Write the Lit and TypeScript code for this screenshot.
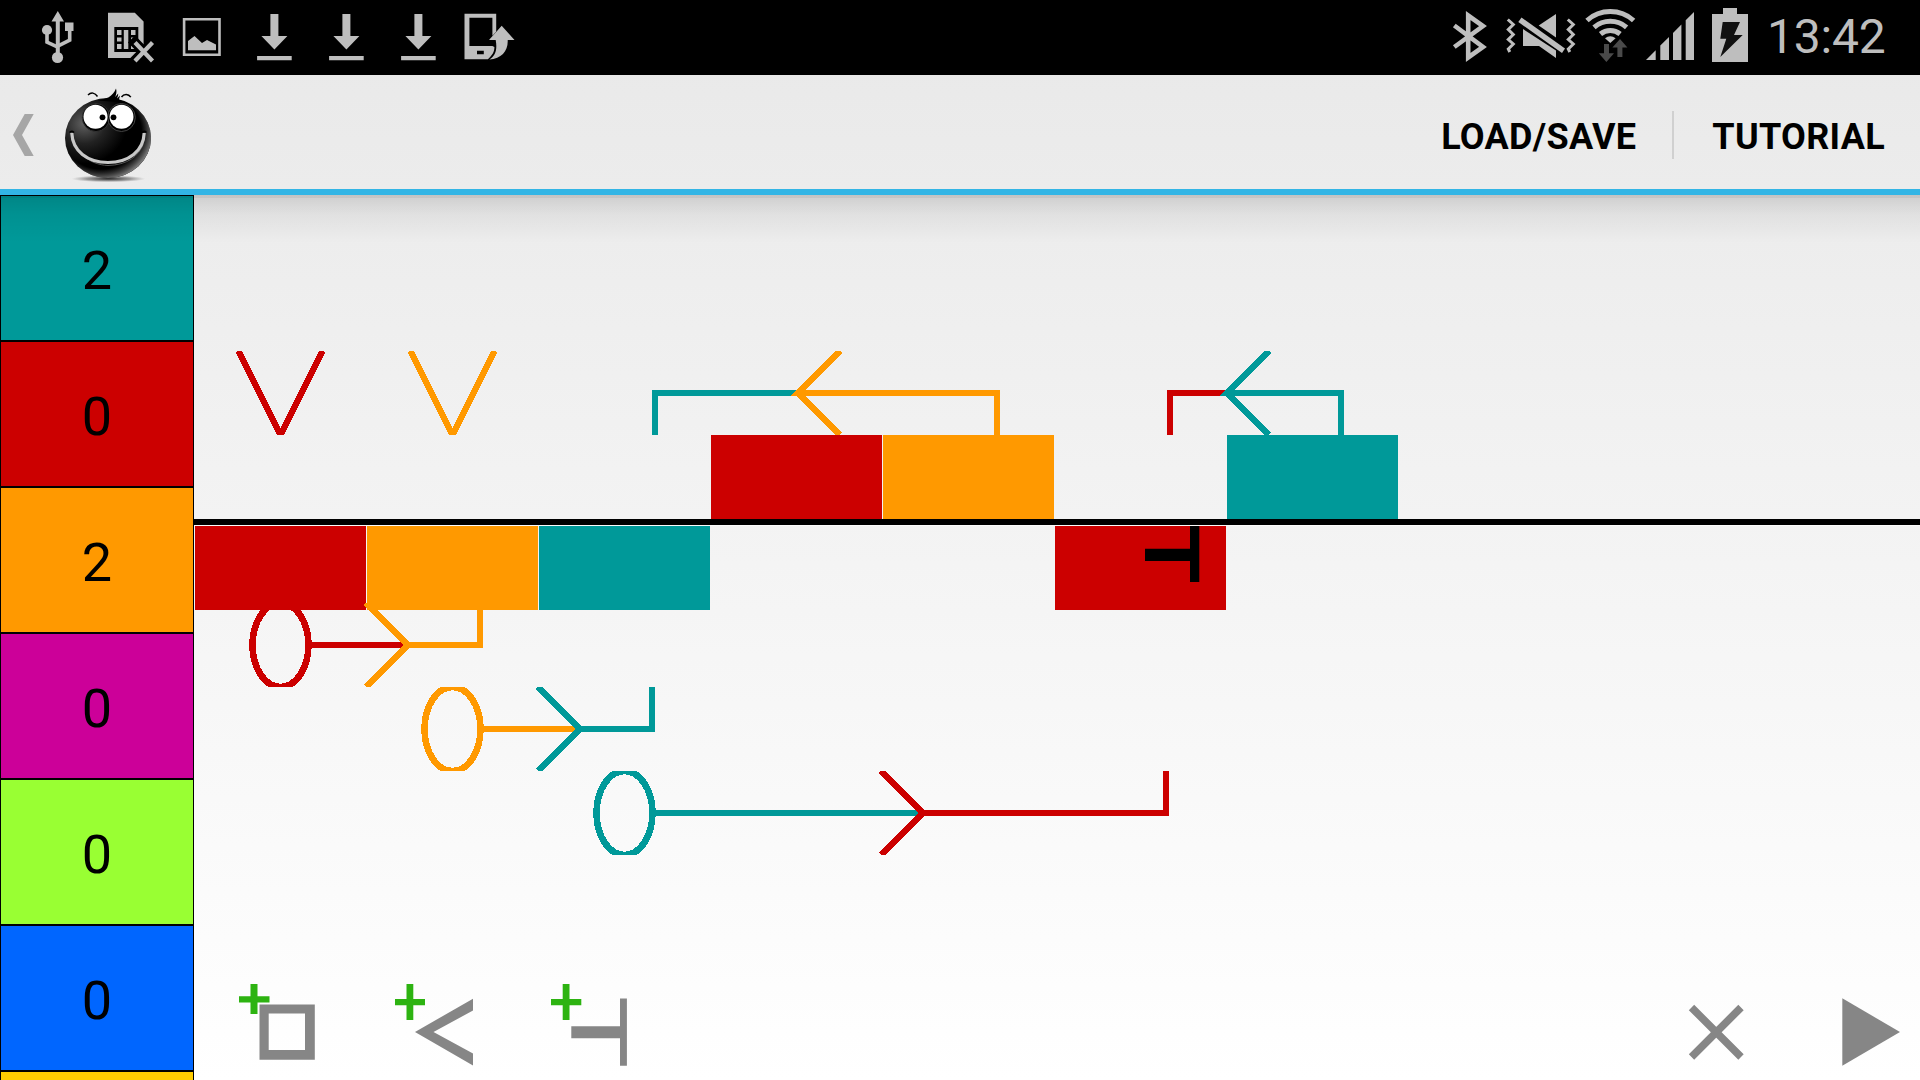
import { LitElement, html, svg, css } from "lit";
import { customElement } from "lit/decorators.js";

const RED = "#cc0000";
const ORANGE = "#ff9900";
const TEAL = "#009999";
const GREY = "#bebebe";

const registers = [
  { color: TEAL, count: "2" },
  { color: RED, count: "0" },
  { color: ORANGE, count: "2" },
  { color: "#cc0099", count: "0" },
  { color: "#99ff33", count: "0" },
  { color: "#0066ff", count: "0" },
  { color: "#ffcc00", count: "" },
];

const blocks = [
  { x: 195, y: 526, color: RED },
  { x: 367, y: 526, color: ORANGE },
  { x: 539, y: 526, color: TEAL },
  { x: 711, y: 435, color: RED },
  { x: 883, y: 435, color: ORANGE },
  { x: 1055, y: 526, color: RED },
  { x: 1227, y: 435, color: TEAL },
];

const inputs = [
  { x: 280.5, color: RED },
  { x: 452.5, color: ORANGE },
];

const backLinks = [
  { from: 655, tip: 798, to: 997, a: TEAL, b: ORANGE },
  { from: 1170, tip: 1227, to: 1341, a: RED, b: TEAL },
];

const forwardLinks = [
  { cx: 280.5, tip: 408, to: 480, top: 603, a: RED, b: ORANGE },
  { cx: 452.5, tip: 580, to: 652, top: 687, a: ORANGE, b: TEAL },
  { cx: 624.5, tip: 923, to: 1166, top: 771, a: TEAL, b: RED },
];

const icon = (x: number, width: number, body: unknown) => html`
  <svg class="icon" width=${width} height="75" viewBox="${x} 0 ${width} 75">${body}</svg>
`;

const download = (left: number) => {
  const cx = left + 36.4;
  return icon(left, 72, svg`
    <path fill=${GREY} d="M${cx - 4} 14h8v22h9L${cx} 49.500L${cx - 13} 36h9zM${cx - 17.300} 56h34.600v4.200h-34.600z"/>`);
};

@customElement("status-bar")
class StatusBar extends LitElement {
  static styles = css`
    :host { display: flex; height: 75px; background: #000; overflow: hidden; }
    .icon { display: block; flex: none; }
    .left { display: flex; padding-left: 30px; }
    .right { display: flex; margin-left: auto; }
    .clock {
      font: 400 48px/73px Roboto, sans-serif; letter-spacing: -0.2px; color: #bebebe;
      width: 153px; height: 75px; box-sizing: border-box;
    }
  `;
  render() {
    return html`
      <div class="left">
        ${icon(30, 66, svg`
          <g fill=${GREY}>
            <path d="M57.800 11L64 21.500h-4.200V56h-4V21.500h-4.300z"/>
            <circle cx="57.500" cy="57.500" r="5.600"/><circle cx="47" cy="30" r="5.100"/>
            <path d="M65 22.500h8.500V31H65z"/>
          </g>
          <path d="M47 32v10.200l10.800 5M69.700 30v10.200l-11.900 6" fill="none" stroke=${GREY} stroke-width="3.600"/>`)}
        ${icon(96, 72, svg`
          <path fill=${GREY} d="M108 12.700h26.800L143.600 21.500V58H108z"/>
          <path d="M114.300 27h24v25h-24z"/>
          <path fill=${GREY} d="M117 30h4.500v5H117zM117 37.500h4.500v4H117zM117 44h4.500v5H117zM123.800 30h4.500v19h-4.500zM131 30h4.500v5H131zM131 37.500h4.500v4H131zM131 44h4.500v5H131z"/>
          <path d="M135 42.500l17.500 18M152.500 42.500L135 60.500" stroke="#000" stroke-width="10" stroke-linecap="square"/>
          <path d="M135 42.500l17.500 18.500M152.500 42.500L135 61" stroke=${GREY} stroke-width="4.200"/>`)}
        ${icon(168, 70, svg`
          <path d="M184.100 19.200h35.400v35.500h-35.400z" fill="none" stroke=${GREY} stroke-width="2.600"/>
          <path fill=${GREY} d="M188 50.300V41l6.500-5 7.500 7 5-3 9 4.500v5.800z"/>`)}
        ${download(238)}${download(310)}${download(382)}
        ${icon(454, 70, svg`
          <path fill=${GREY} fill-rule="evenodd" d="M464.500 13.700h31.700v18l-3.800 4V17.700h-23V46h23l2 1c0 5-2 8-6.500 12.300h-23.400zM477 50.700v3.600h6.800v-3.600z"/>
          <path fill=${GREY} d="M501.700 25.700L514.500 40h-6.800c.5 11-6 18.500-18.400 19.500 6-3.500 8.200-9.500 6.400-19.500H489z"/>`)}
      </div>
      <div class="right">
        ${icon(1440, 56, svg`
          <path d="M1454.300 25.500L1483 47l-14.800 10.500v-42L1483 26l-28.700 21" fill="none" stroke=${GREY} stroke-width="4.600"/>`)}
        ${icon(1496, 86, svg`
          <g fill=${GREY}>
            <path d="M1556 14v23.500L1538.700 25.500zM1523 29l33 21.500V58l-17-12h-16z"/>
            <path d="M1521.500 17.500l43.500 31-3 4.500-43.700-31z"/>
          </g>
          <path d="M1508.300 19l5.500 5-5 5 5 5-5 5 5 4.500-5 5 1.500 3M1568.300 19l5.500 5-5 5 5 5-5 5 5 4.500-5 5 1.500 3" transform="translate(-.5 .5)" fill="none" stroke=${GREY} stroke-width="3"/>`)}
        ${icon(1582, 60, svg`
          <g fill="none" stroke=${GREY} stroke-width="5">
            <path d="M1587 20.500a35 35 0 0 1 46.600 0"/>
            <path d="M1594 27.300a25 25 0 0 1 32.600 0"/>
            <path d="M1600.500 34a15.500 15.500 0 0 1 19.600 0"/>
          </g>
          <path fill=${GREY} d="M1605 38.300q5.300-4 10.600 0l-5.300 4.700z"/>
          <path fill="#4a4a4a" d="M1604 44h5v9.300h5l-7.600 8.700-7.600-8.700h5.200zM1620 39l7.400 8.500h-5V57h-5v-9.500h-5z"/>`)}
        ${icon(1642, 62, svg`
          <path fill=${GREY} d="M1646 60l9.700-9.700V60zM1660.300 60V45.500l8.700-8.500v23zM1673 60V33l8.400-8.500V60zM1685.700 60V20.300L1694 12v48z"/>`)}
        ${icon(1704, 63, svg`
          <path fill=${GREY} d="M1723 8h14v6h11v48h-36V14h11z"/>
          <path fill="#111" d="M1722.700 22h17.300l-6 13h8.700l-22.400 22 6-18.300h-6z"/>`)}
        <div class="clock">13:42</div>
      </div>
    `;
  }
}

@customElement("action-bar")
class ActionBar extends LitElement {
  static styles = css`
    :host {
      display: flex; align-items: center; height: 120px; box-sizing: border-box;
      border-bottom: 6px solid #33b5e5;
      font: 700 36px/42px Roboto, sans-serif; letter-spacing: 0.3px; color: #000;
    }
    .home { display: block; flex: none; }
    .menu { display: flex; align-items: center; height: 114px; margin-left: auto; padding-right: 35px; }
    .divider { width: 2px; height: 48px; margin: 6px 38px 0 36px; background: #d0d0d0; }
    .item { white-space: nowrap; padding-top: 10px; }
  `;
  render() {
    return html`
      <svg class="home" width="180" height="114" viewBox="0 75 180 114">
        <defs>
          <radialGradient id="ball" cx=".22" cy=".32" r=".5">
            <stop offset="0" stop-color="#606060"/><stop offset=".5" stop-color="#222"/><stop offset="1" stop-color="#000"/>
          </radialGradient>
          <radialGradient id="rim" cx=".42" cy=".42" r=".6">
            <stop offset=".78" stop-color="#555" stop-opacity="0"/><stop offset="1" stop-color="#777"/>
          </radialGradient>
          <radialGradient id="ground"><stop offset="0" stop-color="#222"/><stop offset=".6" stop-color="#777" stop-opacity=".7"/><stop offset="1" stop-color="#999" stop-opacity="0"/></radialGradient>
        </defs>
        <path fill="#a6a6a6" d="M33.700 114h-9L13 135l11.700 21h9L22 135z"/>
        <ellipse cx="108.500" cy="178.800" rx="37" ry="3.500" fill="url(#ground)"/>
        <ellipse cx="108" cy="138" rx="43" ry="40" fill="url(#ball)"/>
        <ellipse cx="108" cy="138" rx="43" ry="40" fill="url(#rim)"/>
        <path d="M97 100.500c9-1 16-4 19-12 1 3 .3 6-.8 8.500l3-3.500c0 2-.5 3.500-1.200 5l3-3-1 4 6 3z"/>
        <path d="M88 95c3-3 7-2.500 9.500 1.500M121.500 97c2.500-3.500 7-3.300 9.300.2" fill="none" stroke="#000" stroke-width="1.500"/>
        <ellipse cx="96" cy="117.500" rx="13.800" ry="14" fill="#000" stroke="#333" stroke-width="1"/>
        <ellipse cx="121.500" cy="117.500" rx="13.800" ry="14" fill="#000" stroke="#444" stroke-width="1"/>
        <circle cx="95.500" cy="116.800" r="12" fill="#fff"/><circle cx="121.500" cy="116.800" r="12" fill="#fff"/>
        <circle cx="102.500" cy="117.300" r="2.900"/><circle cx="113.500" cy="117.300" r="2.900"/>
        <path d="M73 136c3 17 16 28.500 35 29.500 19-.5 31-9 35.500-22" fill="none" stroke="#555" stroke-width="1"/>
        <path d="M71.800 133c.7 18 15.500 29.500 36.200 29.500s35.500-11.500 36.200-29.500" fill="none" stroke="#c8c8c8" stroke-width="3.200"/>
        <path d="M69.500 132.500q2-2.500 4.500 0M142 132.500q2-2.500 4.500 0" fill="none" stroke="#000" stroke-width="1.500"/>
      </svg>
      <nav class="menu">
        <span class="item">LOAD/SAVE</span>
        <span class="divider"></span>
        <span class="item">TUTORIAL</span>
      </nav>
    `;
  }
}

@customElement("register-list")
class RegisterList extends LitElement {
  static styles = css`
    :host { display: flex; flex-direction: column; width: 194px; flex: none; overflow: hidden; }
    .cell {
      flex: none; height: 146px; box-sizing: border-box; border: 1px solid #000;
      display: flex; align-items: center; justify-content: center; padding-top: 5px;
      font: 400 54px/64px Roboto, sans-serif; color: #000;
    }
  `;
  render() {
    return registers.map(r => html`<div class="cell" style="background:${r.color}">${r.count}</div>`);
  }
}

@customElement("program-canvas")
class ProgramCanvas extends LitElement {
  static styles = css`
    :host { display: block; flex: 1; }
    .drawing { display: block; }
    .link { fill: none; stroke-width: 6; }
    .slant { fill: none; stroke-width: 6.6; }
  `;
  render() {
    return html`
      <svg class="drawing" width="1726" height="885" viewBox="194 195 1726 885" shape-rendering="crispEdges">
        <defs>
          <clipPath id="upper"><rect x="194" y="351" width="1726" height="84"/></clipPath>
          ${forwardLinks.map(l => svg`<clipPath id="row${l.top}"><rect x="194" y=${l.top} width="1726" height="84"/></clipPath>`)}
        </defs>
        <rect x="194" y="519" width="1726" height="6" fill="#000"/>
        <rect x="194" y="525" width="1726" height="1" fill="#fbfbfb"/>
        ${blocks.map(b => svg`<rect x=${b.x} y=${b.y} width="171" height="84" fill=${b.color}/>`)}
        <g clip-path="url(#upper)">
          ${inputs.map(i => svg`<path class="slant" stroke=${i.color} d="M${i.x - 42} 351L${i.x} 435L${i.x + 42} 351"/>`)}
          ${backLinks.map(l => svg`
            <path class="link" stroke=${l.a} d="M${l.from} 435V393H${l.tip}"/>
            <path class="link" stroke=${l.b} d="M${l.tip} 393H${l.to}V435"/>
            <path class="slant" stroke=${l.b} d="M${l.tip + 42} 351L${l.tip} 393L${l.tip + 42} 435"
              stroke-linejoin="bevel"/>
            <path fill=${l.b} d="M${l.tip - 1.5} 390L${l.tip - 7.5} 396H${l.tip + 4}V390z"/>`)}
        </g>
        ${forwardLinks.map(l => {
          const y = l.top + 42;
          return svg`<g clip-path="url(#row${l.top})">
            <ellipse class="slant" cx=${l.cx} cy=${y} rx="28" ry="42" stroke=${l.a}/>
            <path class="link" stroke=${l.a} d="M${l.cx + 28} ${y}H${l.tip}"/>
            <path class="link" stroke=${l.b} d="M${l.tip} ${y}H${l.to}V${l.top}"/>
            <path class="slant" stroke=${l.b} stroke-linejoin="bevel" d="M${l.tip - 42} ${l.top}L${l.tip} ${y}L${l.tip - 42} ${y + 42}"/>
          </g>`;
        })}
        <path shape-rendering="auto" d="M1190 526h9.300v56H1190v-21h-45v-12.300h45z"/>
      </svg>
    `;
  }
}

@customElement("tool-bar")
class ToolBar extends LitElement {
  static styles = css`
    :host { display: flex; height: 108px; }
    .tool { display: block; flex: none; }
    .spacer { flex: 1; }
    .soft { filter: blur(0.6px); }
  `;
  private tool(x: number, width: number, body: unknown) {
    return html`<svg class="tool" width=${width} height="108" viewBox="${x} 972 ${width} 108"><g class="soft" fill="#868686">${body}</g></svg>`;
  }
  render() {
    return html`
      ${this.tool(194, 172, svg`
        <path fill="#2db311" d="M250.500 984h7v12.300h12v6.200h-12V1014h-7v-11.500H239v-6.200h11.500z"/>
        <path fill-rule="evenodd" d="M259.500 1004.500h55.300v55.300h-55.300zM268.700 1013.500V1050H305v-36.500z"/>`)}
      ${this.tool(366, 160, svg`
        <path fill="#2db311" d="M406.500 984h6.800v15H425v6.300h-11.700V1020h-6.800v-14.700H395V999h11.500z"/>
        <path d="M473 998.700V1010.500L433.500 1032l39.500 21.500v12L415 1032z"/>`)}
      ${this.tool(526, 140, svg`
        <path fill="#2db311" d="M562.700 984h6.800v15h11.800v6.300h-11.800V1020h-6.800v-14.700H551V999h11.700z"/>
        <path d="M620 998.500h6.900v67.200H620v-27.400h-48.700v-12H620z"/>`)}
      <span class="spacer"></span>
      ${this.tool(1660, 120, svg`
        <path d="M1691.500 1007.500l49.500 49.500M1741 1007.500l-49.500 49.500" stroke="#868686" stroke-width="7.600"/>`)}
      ${this.tool(1780, 140, svg`<path d="M1842.300 998.300L1900 1032l-57.700 33.700z"/>`)}
    `;
  }
}

@customElement("app-root")
class AppRoot extends LitElement {
  static styles = css`
    :host {
      display: flex; flex-direction: column; width: 1920px; height: 1080px; overflow: hidden;
      background: linear-gradient(#e8e8e8, #ffffff);
    }
    .body { position: relative; display: flex; flex: 1; min-height: 0; }
    .shade {
      position: absolute; left: 0; right: 0; top: 0; height: 48px; pointer-events: none;
      background:
        linear-gradient(rgba(0, 0, 0, 0.05), rgba(0, 0, 0, 0.05)) 0 0 / 100% 3px no-repeat,
        linear-gradient(rgba(0, 0, 0, 0.13), rgba(0, 0, 0, 0.05) 40%, transparent);
    }
    .tools { position: absolute; left: 194px; right: 0; bottom: 0; }
  `;
  render() {
    return html`
      <status-bar></status-bar>
      <action-bar></action-bar>
      <div class="body">
        <register-list></register-list>
        <program-canvas></program-canvas>
        <tool-bar class="tools"></tool-bar>
        <div class="shade"></div>
      </div>
    `;
  }
}
